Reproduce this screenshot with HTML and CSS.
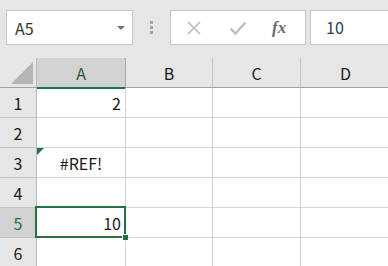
FILE: index.html
```html
<!DOCTYPE html>
<html lang="ja">
<head>
  <meta charset="UTF-8">
  <title>Sheet</title>
  <link rel="stylesheet" href="styles.css">
</head>
<body>
  <div class="toolbar">
    <div class="name-box">
      <span>A5</span>
      <span class="caret"></span>
    </div>
    <div class="grip"><i></i><i></i><i></i></div>
    <div class="fx-buttons">
      <svg class="icon" width="16" height="16" viewBox="0 0 16 16">
        <path d="M2 2 L14 14 M14 2 L2 14" stroke="#bcbcbc" stroke-width="1.6" fill="none"/>
      </svg>
      <svg class="icon" width="18" height="16" viewBox="0 0 18 16">
        <path d="M1.5 8.5 L6.5 13.5 L16.5 2.5" stroke="#bcbcbc" stroke-width="2.4" fill="none"/>
      </svg>
      <span class="fx">fx</span>
    </div>
    <div class="formula">10</div>
  </div>

  <div class="sheet">
    <div class="corner"><span class="corner-tri"></span></div>
    <div class="col-head active">A</div>
    <div class="col-head">B</div>
    <div class="col-head">C</div>
    <div class="col-head">D</div>

    <div class="row-head">1</div>
    <div class="cell num">2</div>
    <div class="cell"></div>
    <div class="cell"></div>
    <div class="cell"></div>

    <div class="row-head">2</div>
    <div class="cell"></div>
    <div class="cell"></div>
    <div class="cell"></div>
    <div class="cell"></div>

    <div class="row-head">3</div>
    <div class="cell err"><span class="flag"></span>#REF!</div>
    <div class="cell"></div>
    <div class="cell"></div>
    <div class="cell"></div>

    <div class="row-head">4</div>
    <div class="cell"></div>
    <div class="cell"></div>
    <div class="cell"></div>
    <div class="cell"></div>

    <div class="row-head active">5</div>
    <div class="cell num selected">10<span class="handle"></span></div>
    <div class="cell"></div>
    <div class="cell"></div>
    <div class="cell"></div>

    <div class="row-head">6</div>
    <div class="cell"></div>
    <div class="cell"></div>
    <div class="cell"></div>
    <div class="cell"></div>
  </div>
</body>
</html>
```

FILE: styles.css
```css
body {
  margin: 0;
  width: 388px;
  height: 266px;
  overflow: hidden;
  background-color: #e6e6e6;
  font-family: "Noto Sans CJK JP", "Noto Sans", sans-serif;
  color: #1a1a1a;
}

.toolbar {
  display: flex;
  align-items: flex-start;
  height: 58px;
  padding-top: 10px;
  box-sizing: border-box;
}

.name-box {
  display: flex;
  align-items: center;
  justify-content: space-between;
  box-sizing: border-box;
  width: 127px;
  height: 35px;
  margin-left: 6px;
  padding: 0 7px 0 8px;
  background-color: #ffffff;
  border: 1px solid #c6c6c6;
  font-size: 16px;
  color: #333333;
}

.caret {
  width: 0;
  height: 0;
  border-left: 4px solid transparent;
  border-right: 4px solid transparent;
  border-top: 4px solid #777777;
}

.grip {
  display: flex;
  flex-direction: column;
  gap: 2px;
  width: 37px;
  align-items: center;
  padding-top: 11px;
}

.grip i {
  display: block;
  width: 3px;
  height: 3px;
  background-color: #a6a6a6;
}

.fx-buttons {
  display: flex;
  align-items: center;
  box-sizing: border-box;
  width: 136px;
  height: 35px;
  padding-left: 15px;
  gap: 27px;
  background-color: #ffffff;
  border: 1px solid #c6c6c6;
}

.fx {
  font-family: "Liberation Serif", serif;
  font-style: italic;
  font-size: 17px;
  font-weight: bold;
  color: #6d6d6d;
  margin-left: -2px;
}

.formula {
  flex: 1;
  box-sizing: border-box;
  height: 35px;
  margin-left: 4px;
  margin-right: -4px;
  padding-left: 15px;
  line-height: 33px;
  background-color: #ffffff;
  border: 1px solid #c6c6c6;
  font-size: 16px;
  color: #2a3f66;
}

.sheet {
  display: grid;
  grid-template-columns: 37px 89px 87px 88px 90px;
  grid-template-rows: 30px repeat(6, 30px);
  background-color: #ffffff;
  font-size: 16px;
}

.corner {
  position: relative;
  background-color: #e6e6e6;
  border-right: 1px solid #b8b8b8;
  border-bottom: 1px solid #a0a0a0;
}

.corner-tri {
  position: absolute;
  right: 3px;
  bottom: 3px;
  width: 0;
  height: 0;
  border-left: 22px solid transparent;
  border-bottom: 22px solid #b4b4b4;
}

.col-head {
  display: flex;
  align-items: center;
  justify-content: center;
  background-color: #e6e6e6;
  border-right: 1px solid #c4c4c4;
  border-bottom: 1px solid #a0a0a0;
  color: #1a1a1a;
}

.col-head.active {
  background-color: #d2d2d2;
  color: #1d5c3a;
  border-bottom: 2px solid #217346;
  border-right-color: #a8a8a8;
  margin-bottom: -1px;
}

.row-head {
  display: flex;
  align-items: center;
  justify-content: center;
  background-color: #e6e6e6;
  border-right: 1px solid #b8b8b8;
  border-bottom: 1px solid #c4c4c4;
}

.row-head.active {
  background-color: #d2d2d2;
  color: #217346;
}

.cell {
  position: relative;
  display: flex;
  align-items: center;
  border-right: 1px solid #d4d4d4;
  border-bottom: 1px solid #d4d4d4;
  padding: 0 4px;
}

.cell.num {
  justify-content: flex-end;
}

.cell.err {
  justify-content: center;
}

.flag {
  position: absolute;
  left: 0;
  top: 0;
  width: 0;
  height: 0;
  border-top: 7px solid #217346;
  border-right: 7px solid transparent;
}

.selected::before {
  content: "";
  position: absolute;
  left: -2px;
  top: -2px;
  right: -1px;
  bottom: -1px;
  border: 2px solid #217346;
}

.handle {
  position: absolute;
  right: -4px;
  bottom: -4px;
  width: 5px;
  height: 5px;
  background-color: #217346;
  border: 1px solid #ffffff;
  z-index: 1;
}
```
